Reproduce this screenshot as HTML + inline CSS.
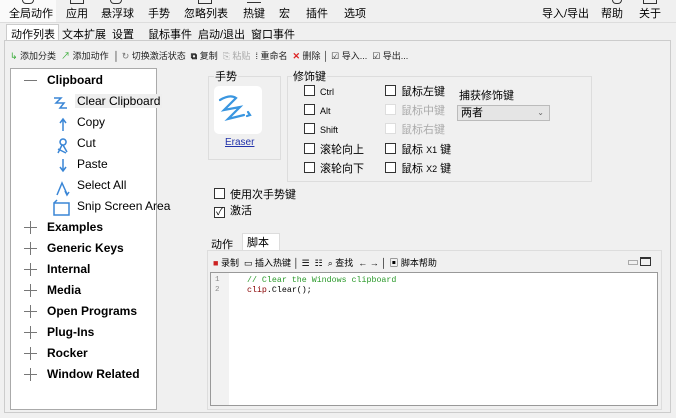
<!DOCTYPE html><html><head><meta charset="utf-8"><style>
*{margin:0;padding:0;box-sizing:border-box}
body{width:676px;height:418px;background:#f0f0f0;font-family:"Liberation Sans","Noto Sans CJK SC",sans-serif;position:relative;overflow:hidden;color:#000}
.a{position:absolute;white-space:nowrap}
.tb{font-size:11px;top:5px}
.cb{display:inline-block;width:11px;height:11px;border:1px solid #333;background:#fff;vertical-align:-1px;margin-right:5px}
.f11{font-size:11px}
.sm{font-size:9px}
.tree .a{font-size:12px}
.b{font-weight:bold}
.pl{position:absolute;width:13px;height:1px;background:#777}
.pv{position:absolute;width:1px;height:13px;background:#777}
</style></head><body>
<div class="a" style="left:0;top:0;width:56px;height:22px;background:#fafafa"></div>
<div class="a tb" style="left:9px">全局动作</div>
<div class="a tb" style="left:66px">应用</div>
<div class="a tb" style="left:101px">悬浮球</div>
<div class="a tb" style="left:148px">手势</div>
<div class="a tb" style="left:184px">忽略列表</div>
<div class="a tb" style="left:243px">热键</div>
<div class="a tb" style="left:279px">宏</div>
<div class="a tb" style="left:306px">插件</div>
<div class="a tb" style="left:344px">选项</div>
<div class="a tb" style="left:542px">导入/导出</div>
<div class="a tb" style="left:601px">帮助</div>
<div class="a tb" style="left:639px">关于</div>
<div class="a" style="left:22px;top:0;width:12px;height:4px;border:1.5px solid #333;border-top:none;border-radius:0 0 6px 6px"></div>
<div class="a" style="left:70px;top:0;width:14px;height:4px;border:1.5px solid #333;border-top:none"></div>
<div class="a" style="left:110px;top:0;width:12px;height:4px;border:1.5px solid #333;border-top:none;border-radius:0 0 6px 6px"></div>
<div class="a" style="left:198px;top:0;width:14px;height:4px;border:1.5px solid #333;border-top:none"></div>
<div class="a" style="left:247px;top:0;width:14px;height:3px;border-bottom:1.5px solid #333"></div>
<div class="a" style="left:612px;top:0;width:10px;height:4px;border:1.5px solid #333;border-top:none;border-radius:0 0 5px 5px"></div>
<div class="a" style="left:643px;top:0;width:14px;height:4px;border:1.5px solid #333;border-top:none"></div>
<div class="a" style="left:0;top:22px;width:676px;height:1px;background:#ddd"></div>
<div class="a" style="left:6px;top:24px;width:53px;height:17px;background:#fff;border:1px solid #ccc;border-bottom:none"></div>
<div class="a f11" style="left:11px;top:26px">动作列表</div>
<div class="a f11" style="left:62px;top:26px">文本扩展</div>
<div class="a f11" style="left:112px;top:26px">设置</div>
<div class="a f11" style="left:148px;top:26px">鼠标事件</div>
<div class="a f11" style="left:198px;top:26px">启动/退出</div>
<div class="a f11" style="left:251px;top:26px">窗口事件</div>
<div class="a" style="left:4px;top:40px;width:667px;height:373px;border:1px solid #ccc;background:#f0f0f0"></div>
<div class="a sm" style="left:10px;top:49px;color:#222"><span style="color:#3a3">↳</span> 添加分类 &nbsp;<span style="color:#3a3">↗</span> 添加动作 &nbsp;│ <span style="color:#777">↻</span> 切换激活状态 &nbsp;<b>⧉</b> 复制 &nbsp;<span style="color:#aaa">⎘ 粘贴</span> &nbsp;⁞ 重命名 &nbsp;<span style="color:#d22;font-weight:bold">✕</span> 删除 │ ☑ 导入... &nbsp;☑ 导出...</div>
<div class="a tree" style="left:10px;top:68px;width:147px;height:342px;background:#fff;border:1px solid #aaa">
<div class="pl" style="left:13px;top:11px"></div>
<div class="a b" style="left:36px;top:4px">Clipboard</div>
<div class="a" style="left:66px;top:25px;background:#eee;padding:0 2px;margin-left:-2px">Clear Clipboard</div>
<div class="a" style="left:66px;top:46px">Copy</div>
<div class="a" style="left:66px;top:67px">Cut</div>
<div class="a" style="left:66px;top:88px">Paste</div>
<div class="a" style="left:66px;top:109px">Select All</div>
<div class="a" style="left:66px;top:130px">Snip Screen Area</div>
<svg class="a" style="left:40px;top:24px" width="22" height="126" viewBox="0 0 22 126" fill="none" stroke="#3a86d6" stroke-width="1.5">
<path d="M3 5h7l-5 5h8l-4 5h7"/>
<path d="M12 38v-12M9 30l3-4 3 4"/>
<path d="M12 52a3 3 0 1 1 .1 0M11 52l-4 8M12 52l4 7M7 56l8 4"/>
<path d="M12 66v12M9 74l3 4 3-4"/>
<path d="M6 102l5-12 5 11M14 98l2 4 2-3"/>
<rect x="3" y="110" width="15" height="12"/><path d="M3 110l3-3"/>
</svg>
<div class="pl" style="left:13px;top:158px"></div><div class="pv" style="left:19px;top:152px"></div>
<div class="a b" style="left:36px;top:151px">Examples</div>
<div class="pl" style="left:13px;top:179px"></div><div class="pv" style="left:19px;top:173px"></div>
<div class="a b" style="left:36px;top:172px">Generic Keys</div>
<div class="pl" style="left:13px;top:200px"></div><div class="pv" style="left:19px;top:194px"></div>
<div class="a b" style="left:36px;top:193px">Internal</div>
<div class="pl" style="left:13px;top:221px"></div><div class="pv" style="left:19px;top:215px"></div>
<div class="a b" style="left:36px;top:214px">Media</div>
<div class="pl" style="left:13px;top:242px"></div><div class="pv" style="left:19px;top:236px"></div>
<div class="a b" style="left:36px;top:235px">Open Programs</div>
<div class="pl" style="left:13px;top:263px"></div><div class="pv" style="left:19px;top:257px"></div>
<div class="a b" style="left:36px;top:256px">Plug-Ins</div>
<div class="pl" style="left:13px;top:284px"></div><div class="pv" style="left:19px;top:278px"></div>
<div class="a b" style="left:36px;top:277px">Rocker</div>
<div class="pl" style="left:13px;top:305px"></div><div class="pv" style="left:19px;top:299px"></div>
<div class="a b" style="left:36px;top:298px">Window Related</div>
</div>
<div class="a" style="left:208px;top:76px;width:73px;height:84px;border:1px solid #ddd"></div>
<div class="a f11" style="left:214px;top:68px;background:#f0f0f0;padding:0 1px">手势</div>
<div class="a" style="left:214px;top:86px;width:48px;height:48px;background:#fff;border-radius:5px"></div>
<svg class="a" style="left:214px;top:86px" width="48" height="48" fill="none" stroke="#3a96e0" stroke-width="2.2" stroke-linecap="round"><path d="M6 14q10-6 16-2l-12 12 16-3-12 12 16-4M34 26l2 3-3 1"/></svg>
<div class="a" style="left:225px;top:137px;font-size:10px;color:#2233aa;text-decoration:underline">Eraser</div>
<div class="a" style="left:287px;top:76px;width:305px;height:106px;border:1px solid #ddd"></div>
<div class="a f11" style="left:292px;top:68px;background:#f0f0f0;padding:0 1px">修饰键</div>
<div class="a" style="left:304px;top:85px;font-size:9px"><span class="cb"></span>Ctrl</div>
<div class="a" style="left:304px;top:104px;font-size:9px"><span class="cb"></span>Alt</div>
<div class="a" style="left:304px;top:123px;font-size:9px"><span class="cb"></span>Shift</div>
<div class="a f11" style="left:304px;top:141px"><span class="cb"></span>滚轮向上</div>
<div class="a f11" style="left:304px;top:160px"><span class="cb"></span>滚轮向下</div>
<div class="a f11" style="left:385px;top:83px"><span class="cb"></span>鼠标左键</div>
<div class="a f11" style="left:385px;top:102px;color:#aaa"><span class="cb" style="border-color:#ddd"></span>鼠标中键</div>
<div class="a f11" style="left:385px;top:121px;color:#aaa"><span class="cb" style="border-color:#ddd"></span>鼠标右键</div>
<div class="a f11" style="left:385px;top:141px"><span class="cb"></span>鼠标 <span style="font-size:9px">X1</span> 键</div>
<div class="a f11" style="left:385px;top:160px"><span class="cb"></span>鼠标 <span style="font-size:9px">X2</span> 键</div>
<div class="a f11" style="left:459px;top:87px">捕获修饰键</div>
<div class="a f11" style="left:457px;top:105px;width:93px;height:16px;background:#e5e5e5;border:1px solid #bbb;padding:0 3px;line-height:14px">两者<span style="position:absolute;right:5px;top:0;font-size:8px;color:#666">⌄</span></div>
<div class="a f11" style="left:214px;top:186px"><span class="cb"></span>使用次手势键</div>
<div class="a f11" style="left:214px;top:202px"><span class="cb" style="font-size:10px;line-height:9px;text-align:center">✓</span>激活</div>
<div class="a" style="left:242px;top:233px;width:38px;height:18px;background:#fff;border:1px solid #ddd;border-bottom:none"></div>
<div class="a f11" style="left:211px;top:236px">动作</div>
<div class="a f11" style="left:247px;top:234px">脚本</div>
<div class="a" style="left:207px;top:250px;width:455px;height:160px;border:1px solid #ddd;background:#f0f0f0"></div>
<div class="a sm" style="left:213px;top:256px"><span style="color:#c22">■</span> 录制 &nbsp;▭ 插入热键 │ ☰ &nbsp;☷ &nbsp;⌕ 查找 &nbsp;← → │ ▣ 脚本帮助</div>
<div class="a" style="left:628px;top:260px;width:10px;height:5px;border:1px solid #aaa"></div>
<div class="a" style="left:640px;top:257px;width:11px;height:9px;border:1px solid #333;border-top-width:2px"></div>
<div class="a" style="left:210px;top:272px;width:448px;height:134px;background:#fff;border:1px solid #999"></div>
<div class="a" style="left:211px;top:273px;width:18px;height:132px;background:#f2f2f2"></div>
<div class="a" style="left:215px;top:276px;font-family:'Liberation Mono',monospace;font-size:7.5px;color:#888;line-height:9.5px">1<br>2</div>
<div class="a" style="left:247px;top:276px;font-family:'Liberation Mono',monospace;font-size:8.3px;line-height:9.5px"><span style="color:#2a9a2a">// Clear the Windows clipboard</span><br><span style="color:#800">clip</span>.Clear();</div>
</body></html>
